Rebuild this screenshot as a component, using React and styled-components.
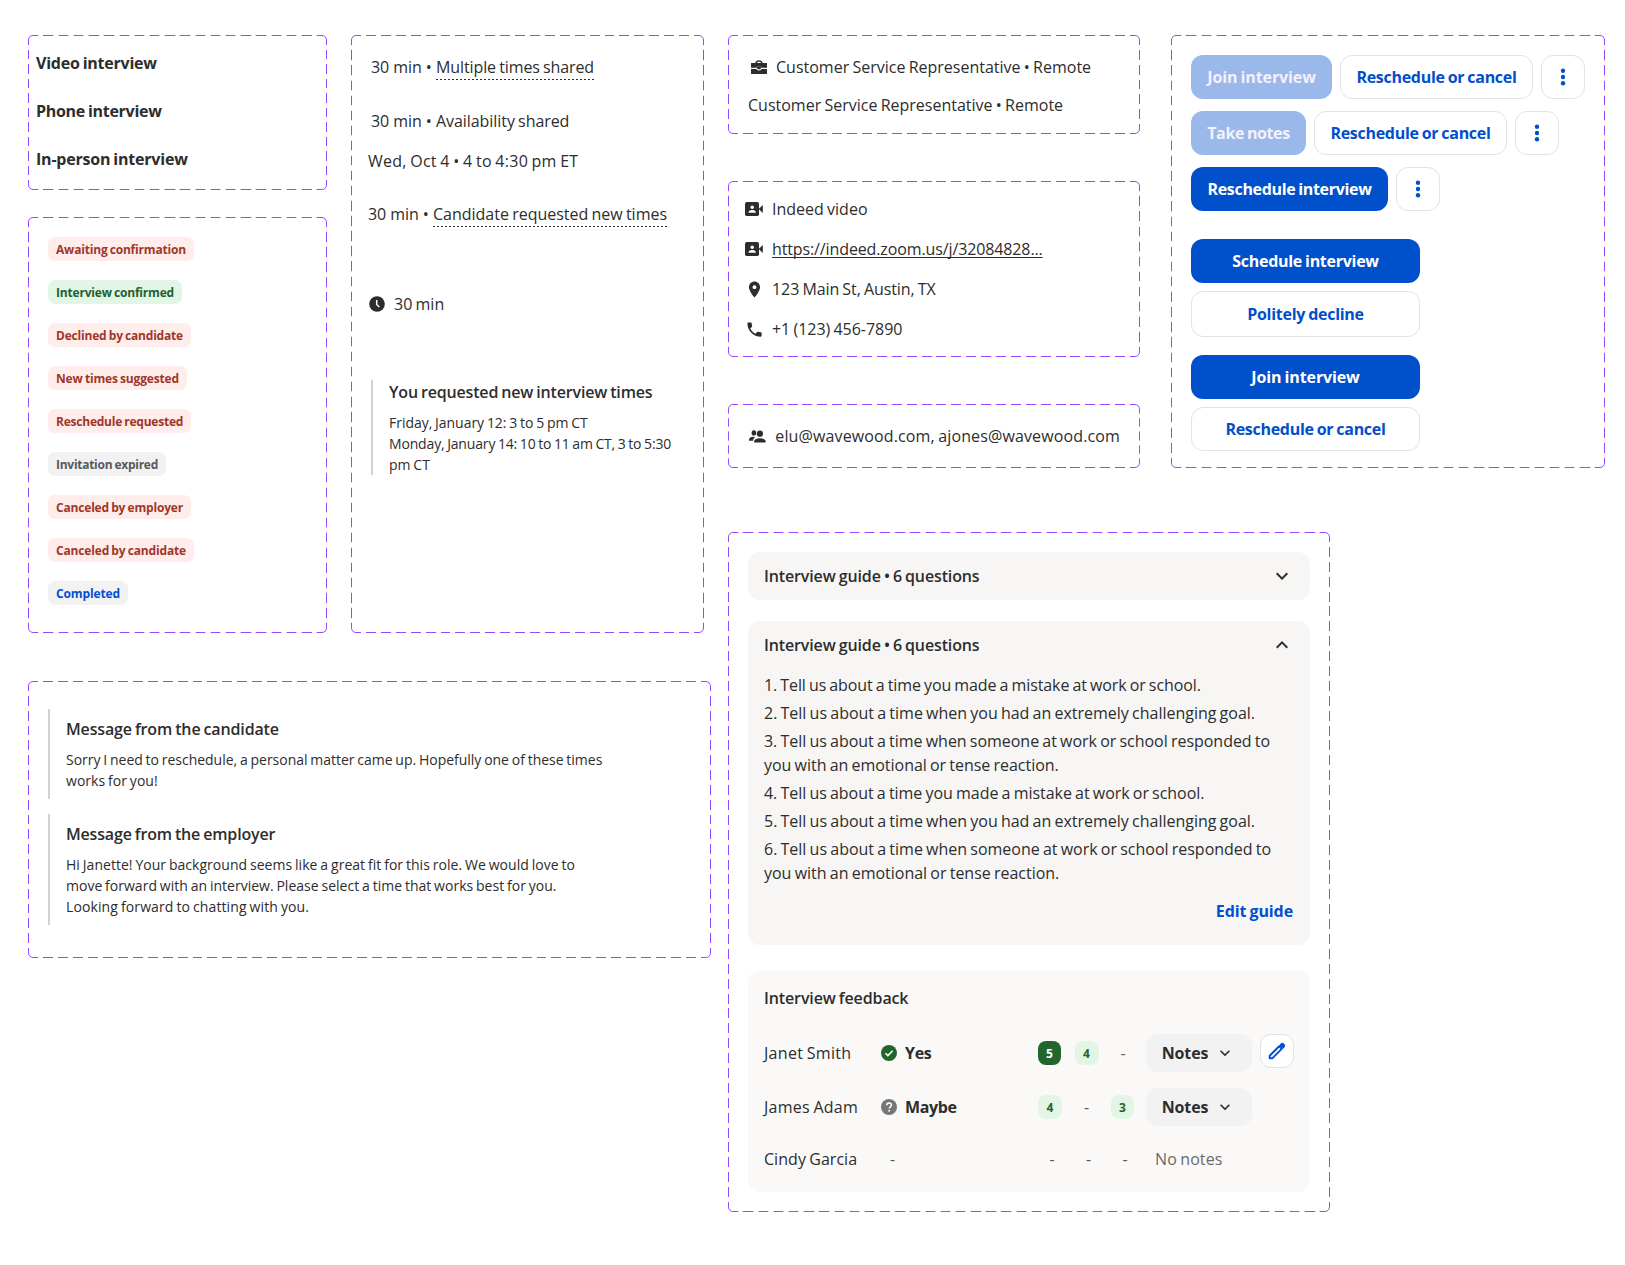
import styled, { createGlobalStyle } from 'styled-components'
import { MdExpandLess, MdExpandMore, MdLocationOn, MdPhone } from 'react-icons/md'

const GlobalStyle = createGlobalStyle`
  * {
    box-sizing: border-box;
    margin: 0;
    padding: 0;
  }

  body {
    background: #ffffff;
    color: #2d2d2d;
    font-family: 'Open Sans', 'Noto Sans', sans-serif;
    font-size: 16px;
    line-height: 24px;
  }

  ul,
  ol {
    list-style: none;
  }

  svg {
    display: block;
    flex: none;
  }
`

// one dash-gap period per edge, so the corners always stay solid
const dashedFrame = encodeURIComponent(
  `<svg xmlns='http://www.w3.org/2000/svg' width='25' height='25' fill='none' stroke='#9747ff'>
    <path d='M.5 10V5A4.5 4.5 0 0 1 5 .5h5M15 .5h5A4.5 4.5 0 0 1 24.5 5v5M24.5 15v5a4.5 4.5 0 0 1-4.5 4.5h-5M10 24.5H5A4.5 4.5 0 0 1 .5 20v-5'/>
  </svg>`
)

const Page = styled.main`
  display: flex;
  gap: 17px;
  width: 1625px;
  height: 1265px;
  padding: 35px 0 0 28px;
`

const LeftArea = styled.div`
  width: 683px;
  display: flex;
  flex-direction: column;
  gap: 48px;
`

const RightArea = styled.div`
  display: flex;
  flex-direction: column;
  align-items: flex-start;
  gap: 64px;
`

const Columns = styled.div`
  display: flex;
  gap: ${p => p.$gap}px;
`

const Stack = styled.div`
  display: flex;
  flex-direction: column;
  gap: ${p => p.$gap}px;
`

const Frame = styled.section`
  width: ${p => p.$width}px;
  height: ${p => p.$height}px;
  border: 1px solid transparent;
  border-image: url("data:image/svg+xml,${dashedFrame}") 5 / 5px round;
`

const Text = styled.span`
  display: block;
  white-space: nowrap;
  word-spacing: -0.9px;
  letter-spacing: ${p => p.$track || 0}px;
`

const Bold = styled(Text)`
  font-weight: 700;
`

const Heading = styled(Text).attrs({ as: 'h3' })`
  font-size: 16px;
  font-weight: 600;
`

/* interview types */

const TypeFrame = styled(Frame)`
  display: flex;
  flex-direction: column;
  gap: 24px;
  padding: 15px 7px;
`

/* status pills */

const tones = {
  danger: { bg: '#ffedeb', color: '#a0362a' },
  success: { bg: '#e2f6e5', color: '#226130' },
  neutral: { bg: '#f2f2f2', color: '#595959' },
  info: { bg: '#f2f2f2', color: '#0050d1' }
}

const PillFrame = styled(Frame)`
  display: flex;
  flex-direction: column;
  align-items: flex-start;
  gap: 19px;
  padding: 19px;
`

const Pill = styled.span`
  height: 24px;
  padding: 1px 8px 0;
  border-radius: 7px;
  font-size: 12px;
  font-weight: 700;
  white-space: nowrap;
  word-spacing: -0.7px;
  letter-spacing: ${p => p.$track}px;
  background: ${p => tones[p.$tone].bg};
  color: ${p => tones[p.$tone].color};
`

/* schedule details */

const ScheduleFrame = styled(Frame)`
  padding: 19px 16px;
`

const Meta = styled.p`
  display: flex;
  white-space: pre;
  margin-left: ${p => p.$indent || 0}px;
  margin-top: ${p => p.$top || 0}px;
`

const Duration = styled.span`
  width: 65px;
  letter-spacing: -0.06px;
`

const DottedText = styled(Text)`
  height: 25px;
  background: repeating-linear-gradient(90deg, #2d2d2d 0 2px, transparent 2px 4px) left bottom / 100% 1px no-repeat;
`

const DurationRow = styled.div`
  display: flex;
  align-items: center;
  gap: 9px;
  margin: 65px 0 0 1px;
`

const Quote = styled.article`
  border-left: 2px solid #d4d2d0;
  padding: ${p => p.$pad || 0}px 0 ${p => p.$pad || 0}px 16px;
`

const RequestedTimes = styled(Quote)`
  margin: 64px 0 0 3px;
`

const QuoteBody = styled.div`
  margin-top: 8px;
  font-size: 14px;
  line-height: 21px;

  ${Text} {
    word-spacing: -0.8px;
  }
`

const MessageFrame = styled(Frame)`
  display: flex;
  flex-direction: column;
  gap: 15px;
  padding: 27px 19px;
`

/* job and contact details */

const JobFrame = styled(Frame)`
  display: flex;
  flex-direction: column;
  gap: 14px;
  padding: 19px;
`

const ContactFrame = styled(Frame)`
  display: flex;
  flex-direction: column;
  gap: 16px;
  padding: 15px 16px;
`

const AttendeeFrame = styled(Frame)`
  padding: 19px;
`

const IconRow = styled.div`
  display: flex;
  align-items: center;
  gap: 9px;
`

const IconSlot = styled.span`
  width: ${p => p.$width || 18}px;
  display: flex;
  justify-content: ${p => (p.$width ? 'flex-end' : 'center')};
`

const UrlText = styled(Text)`
  text-decoration: underline 1px;
  text-underline-offset: 2px;
  text-decoration-skip-ink: none;
`

/* actions */

const ActionFrame = styled(Frame)`
  padding: 19px;
`

const ButtonRow = styled.div`
  display: flex;
  gap: 8px;
`

const ButtonColumn = styled.div`
  width: 229px;
  display: flex;
  flex-direction: column;
  gap: 8px;
  margin-top: ${p => p.$top}px;
`

const Button = styled.button`
  width: ${p => (p.$width ? `${p.$width}px` : 'auto')};
  height: ${p => p.$height || 44}px;
  display: flex;
  align-items: center;
  justify-content: center;
  border: none;
  border-radius: 12px;
  background: #004fcb;
  color: #ffffff;
  font: inherit;

  &:disabled {
    background: #9ab8ea;
    color: #f4f1fd;
  }
`

const OutlineButton = styled(Button)`
  background: #ffffff;
  border: 1px solid #e4e2e0;
  color: #004fcb;
`

const NotesButton = styled(Button)`
  gap: 7px;
  background: #f3f2f2;
  color: #2d2d2d;
  padding-right: 1px;
`

const EditButton = styled(OutlineButton)`
  border-radius: 11px;
  margin-left: 8px;
  align-self: flex-start;
`

/* guide and feedback */

const GuideFrame = styled(Frame)`
  padding: 19px;
`

const Card = styled.div`
  height: ${p => p.$height}px;
  margin-top: ${p => p.$top || 0}px;
  padding: ${p => p.$padY || 12}px 16px 0;
  border-radius: 12px;
  background: ${p => p.$bg || '#f7f6f5'};
`

const CardHeader = styled.header`
  display: flex;
  justify-content: space-between;
`

const QuestionList = styled.ol`
  display: flex;
  flex-direction: column;
  gap: 4px;
  margin-top: 16px;
`

const EditLink = styled(Bold)`
  margin: 14px 1px 0 0;
  text-align: right;
  color: #0050d1;
`

const FeedbackRow = styled.div`
  display: grid;
  grid-template-columns: 117px 157px 108px 106px auto;
  align-items: center;
  justify-content: start;
  margin-top: ${p => p.$top}px;
`

const Verdict = styled.div`
  display: flex;
  align-items: center;
  gap: 8px;
`

const Scores = styled.div`
  display: grid;
  grid-template-columns: repeat(3, 24px);
  gap: 12.5px;
  padding-left: ${p => (p.$empty ? 2 : 0)}px;
`

const Score = styled.span`
  width: ${p => (p.$narrow ? 23 : 24)}px;
  height: 24px;
  padding-top: 1px;
  border-radius: 8px;
  text-align: center;
  font-size: 12px;
  font-weight: 700;
  background: ${p => (p.$strong ? '#22662e' : '#e3f6e6')};
  color: ${p => (p.$strong ? '#ffffff' : '#22662e')};
`

const Dash = styled.span`
  text-align: center;
  color: #595959;
  padding-left: ${p => p.$indent || 0}px;
`

const Muted = styled(Text)`
  padding-left: 9px;
  color: #6a6a6a;
`

const ClockIcon = () => (
  <svg width='16' height='16' viewBox='0 0 16 16'>
    <circle cx='8' cy='8' r='7.8' fill='#2d2d2d' />
    <path d='M7.7 4v4.4l2.6 2.7' fill='none' stroke='#ffffff' strokeWidth='1.5' />
  </svg>
)

const BriefcaseIcon = () => (
  <svg width='16' height='14' viewBox='0 0 16 14' fill='#2d2d2d'>
    <path d='M4.2 3.2C4.5 1.2 6 .2 8 .2s3.5 1 3.8 3h-1.7C9.8 2.1 9.1 1.7 8 1.7s-1.8.4-2.1 1.5z' />
    <path d='M.5 2.9h15a.5.5 0 0 1 .5.500V8h-5.600V6.800H5.600V8H0V3.400a.5.500 0 0 1 .5-.5z' />
    <path d='M0 9h5.600l1.300 1.200h2.200L10.400 9H16v4.500a.5.500 0 0 1-.5.500H.5a.5.500 0 0 1-.5-.5z' />
    <path d='M5.600 6.800h4.800V9L9.100 10.200H6.900L5.600 9z' fill='#2d2d2d' />
    <path d='M0 7.800h5.600L7 9.200h2l1.400-1.400H16V9h-5.400l-1.200 1.200H6.600L5.400 9H0z' fill='#ffffff' />
  </svg>
)

const VideoIcon = () => (
  <svg width='18' height='14' viewBox='0 0 18 14'>
    <rect width='14' height='14' rx='1.7' fill='#2d2d2d' />
    <path d='M13.7 7 17.8 2.9v8.200z' fill='#2d2d2d' />
    <circle cx='7.2' cy='5.2' r='1.7' fill='#ffffff' />
    <path d='M3.6 10.8V10c0-1.300 2-2.100 3.600-2.100s3.600.8 3.600 2.100v.8z' fill='#ffffff' />
  </svg>
)

const PeopleIcon = () => (
  <svg width='17' height='13' viewBox='0 0 17 13' fill='#2d2d2d'>
    <ellipse cx='4.9' cy='2.9' rx='2.3' ry='2.7' />
    <path d='M0 10.8V9.6c0-1.700 2-2.600 4.200-2.800l2 .4C4.700 8 4.100 9.200 4.100 10.800z' />
    <circle cx='10.9' cy='3.7' r='3.1' />
    <path d='M5.2 12.5v-1.200c0-2.100 3-3.100 5.700-3.100s5.700 1 5.700 3.100v1.200z' />
  </svg>
)

const DotsIcon = () => (
  <svg width='24' height='24' viewBox='0 0 24 24' fill='#004fcb'>
    <circle cx='12' cy='5.8' r='2.2' />
    <circle cx='12' cy='12' r='2.2' />
    <circle cx='12' cy='18.2' r='2.2' />
  </svg>
)

const YesIcon = () => (
  <svg width='16' height='16' viewBox='0 0 16 16'>
    <circle cx='8' cy='8' r='8' fill='#22662e' />
    <path d='m4.4 8.2 2.5 2.4 4.7-4.8' fill='none' stroke='#ffffff' strokeWidth='1.5' />
  </svg>
)

const MaybeIcon = () => (
  <svg width='16' height='16' viewBox='0 0 16 16'>
    <circle cx='8' cy='8' r='8' fill='#767676' />
    <path d='M5.7 6.3C5.7 4.9 6.7 4 8.1 4s2.3.9 2.3 2.1c0 1.700-2.200 1.700-2.200 3.500' fill='none' stroke='#ffffff' strokeWidth='1.5' />
    <circle cx='8.2' cy='11.7' r='1' fill='#ffffff' />
  </svg>
)

const PencilIcon = () => (
  <svg width='18' height='18' viewBox='0 0 16 16' fill='none' stroke='#0050d1'>
    <path d='M1.500 14.500v-2.300l8.400-8.400 2.300 2.300-8.400 8.400z' strokeWidth='1.7' strokeLinejoin='round' />
    <path d='m10.800 2.900 1.100-1.100a1.200 1.200 0 0 1 1.700 0l.6.6a1.200 1.200 0 0 1 0 1.700l-1.100 1.100z' fill='#0050d1' strokeWidth='1.400' />
  </svg>
)

const pills = [
  { label: 'Awaiting confirmation', tone: 'danger', track: -0.19 },
  { label: 'Interview confirmed', tone: 'success', track: -0.19 },
  { label: 'Declined by candidate', tone: 'danger', track: -0.19 },
  { label: 'New times suggested', tone: 'danger', track: -0.16 },
  { label: 'Reschedule requested', tone: 'danger', track: -0.23 },
  { label: 'Invitation expired', tone: 'neutral', track: -0.27 },
  { label: 'Canceled by employer', tone: 'danger', track: -0.18 },
  { label: 'Canceled by candidate', tone: 'danger', track: -0.16 },
  { label: 'Completed', tone: 'info', track: -0.12 }
]

const questions = [
  { lines: ['1. Tell us about a time you made a mistake at work or school.'], track: -0.1 },
  { lines: ['2. Tell us about a time when you had an extremely challenging goal.'], track: -0.015 },
  {
    lines: [
      '3. Tell us about a time when someone at work or school responded to',
      'you with an emotional or tense reaction.'
    ],
    track: -0.03
  },
  { lines: ['4. Tell us about a time you made a mistake at work or school.'], track: -0.04 },
  { lines: ['5. Tell us about a time when you had an extremely challenging goal.'], track: -0.015 },
  {
    lines: [
      '6. Tell us about a time when someone at work or school responded to',
      'you with an emotional or tense reaction.'
    ],
    track: -0.015
  }
]

const MoreButton = () => (
  <OutlineButton $width={44} aria-label='More options'>
    <DotsIcon />
  </OutlineButton>
)

const Notes = () => (
  <NotesButton $width={106} $height={38}>
    <Bold $track={-0.16}>Notes</Bold>
    <MdExpandMore size={20} />
  </NotesButton>
)

const App = function App() {
  return (
    <Page>
      <GlobalStyle />

      <LeftArea>
        <Columns $gap={24}>
          <Stack $gap={27}>
            <TypeFrame $width={299} $height={155}>
              <Bold $track={-0.23}>Video interview</Bold>
              <Bold $track={-0.29}>Phone interview</Bold>
              <Bold $track={-0.21}>In-person interview</Bold>
            </TypeFrame>

            <PillFrame $width={299} $height={416}>
              {pills.map(pill => (
                <Pill key={pill.label} $tone={pill.tone} $track={pill.track}>
                  {pill.label}
                </Pill>
              ))}
            </PillFrame>
          </Stack>

          <ScheduleFrame $width={353} $height={598}>
            <Meta $indent={3}>
              <Duration>30 min • </Duration>
              <DottedText $track={-0.1}>Multiple times shared</DottedText>
            </Meta>
            <Meta $indent={3} $top={29}>
              <Duration>30 min • </Duration>
              <Text $track={-0.06}>Availability shared</Text>
            </Meta>
            <Meta $top={16}>
              <Text $track={0.26}>Wed, Oct 4 • 4 to 4:30 pm ET</Text>
            </Meta>
            <Meta $top={29}>
              <Duration>30 min • </Duration>
              <DottedText $track={-0.01}>Candidate requested new times</DottedText>
            </Meta>

            <DurationRow>
              <ClockIcon />
              <Text $track={0}>30 min</Text>
            </DurationRow>

            <RequestedTimes>
              <Heading $track={-0.17}>You requested new interview times</Heading>
              <QuoteBody>
                <Text $track={-0.03}>Friday, January 12: 3 to 5 pm CT</Text>
                <Text $track={-0.16}>Monday, January 14: 10 to 11 am CT, 3 to 5:30</Text>
                <Text>pm CT</Text>
              </QuoteBody>
            </RequestedTimes>
          </ScheduleFrame>
        </Columns>

        <MessageFrame $width={683} $height={277}>
          <Quote $pad={8}>
            <Heading $track={-0.15}>Message from the candidate</Heading>
            <QuoteBody>
              <Text $track={-0.02}>
                Sorry I need to reschedule, a personal matter came up. Hopefully one of these times
              </Text>
              <Text $track={0.03}>works for you!</Text>
            </QuoteBody>
          </Quote>
          <Quote $pad={8}>
            <Heading $track={-0.17}>Message from the employer</Heading>
            <QuoteBody>
              <Text $track={0.03}>
                Hi Janette! Your background seems like a great fit for this role. We would love to
              </Text>
              <Text $track={0.01}>
                move forward with an interview. Please select a time that works best for you.
              </Text>
              <Text $track={0.11}>Looking forward to chatting with you.</Text>
            </QuoteBody>
          </Quote>
        </MessageFrame>
      </LeftArea>

      <RightArea>
        <Columns $gap={31}>
          <Stack $gap={47}>
            <JobFrame $width={412} $height={99}>
              <IconRow>
                <IconSlot $width={19}>
                  <BriefcaseIcon />
                </IconSlot>
                <Text>Customer Service Representative • Remote</Text>
              </IconRow>
              <Text>Customer Service Representative • Remote</Text>
            </JobFrame>

            <ContactFrame $width={412} $height={176}>
              <IconRow>
                <IconSlot>
                  <VideoIcon />
                </IconSlot>
                <Text>Indeed video</Text>
              </IconRow>
              <IconRow>
                <IconSlot>
                  <VideoIcon />
                </IconSlot>
                <UrlText $track={-0.12}>https://indeed.zoom.us/j/32084828...</UrlText>
              </IconRow>
              <IconRow>
                <IconSlot>
                  <MdLocationOn size={19} />
                </IconSlot>
                <Text $track={-0.08}>123 Main St, Austin, TX</Text>
              </IconRow>
              <IconRow>
                <IconSlot>
                  <MdPhone size={19} />
                </IconSlot>
                <Text $track={-0.03}>+1 (123) 456-7890</Text>
              </IconRow>
            </ContactFrame>

            <AttendeeFrame $width={412} $height={64}>
              <IconRow>
                <IconSlot $width={19}>
                  <PeopleIcon />
                </IconSlot>
                <Text $track={0.13}>elu@wavewood.com, ajones@wavewood.com</Text>
              </IconRow>
            </AttendeeFrame>
          </Stack>

          <ActionFrame $width={434} $height={433}>
            <Stack $gap={12}>
              <ButtonRow>
                <Button disabled $width={141}>
                  <Bold $track={-0.11}>Join interview</Bold>
                </Button>
                <OutlineButton $width={193}>
                  <Bold $track={-0.28}>Reschedule or cancel</Bold>
                </OutlineButton>
                <MoreButton />
              </ButtonRow>
              <ButtonRow>
                <Button disabled $width={115}>
                  <Bold $track={-0.38}>Take notes</Bold>
                </Button>
                <OutlineButton $width={193}>
                  <Bold $track={-0.28}>Reschedule or cancel</Bold>
                </OutlineButton>
                <MoreButton />
              </ButtonRow>
              <ButtonRow>
                <Button $width={197}>
                  <Bold $track={-0.33}>Reschedule interview</Bold>
                </Button>
                <MoreButton />
              </ButtonRow>
            </Stack>

            <ButtonColumn $top={28}>
              <Button>
                <Bold $track={-0.27}>Schedule interview</Bold>
              </Button>
              <OutlineButton $height={46}>
                <Bold $track={-0.27}>Politely decline</Bold>
              </OutlineButton>
            </ButtonColumn>
            <ButtonColumn $top={18}>
              <Button>
                <Bold $track={-0.12}>Join interview</Bold>
              </Button>
              <OutlineButton>
                <Bold $track={-0.28}>Reschedule or cancel</Bold>
              </OutlineButton>
            </ButtonColumn>
          </ActionFrame>
        </Columns>

        <GuideFrame $width={602} $height={680}>
          <Card $height={48}>
            <CardHeader>
              <Heading $track={-0.13}>Interview guide • 6 questions</Heading>
              <MdExpandMore size={24} />
            </CardHeader>
          </Card>

          <Card $height={324} $top={21}>
            <CardHeader>
              <Heading $track={-0.13}>Interview guide • 6 questions</Heading>
              <MdExpandLess size={24} />
            </CardHeader>
            <QuestionList>
              {questions.map(question => (
                <li key={question.lines[0]}>
                  {question.lines.map(line => (
                    <Text key={line} $track={question.track}>
                      {line}
                    </Text>
                  ))}
                </li>
              ))}
            </QuestionList>
            <EditLink $track={-0.1}>Edit guide</EditLink>
          </Card>

          <Card $height={222} $top={25} $padY={16} $bg='#faf9f8'>
            <Heading $track={-0.12}>Interview feedback</Heading>

            <FeedbackRow $top={24}>
              <Text $track={0.3}>Janet Smith</Text>
              <Verdict>
                <YesIcon />
                <Bold $track={-0.3}>Yes</Bold>
              </Verdict>
              <Scores>
                <Score $strong $narrow>
                  5
                </Score>
                <Score>4</Score>
                <Dash>-</Dash>
              </Scores>
              <Notes />
              <EditButton $width={34} $height={34} aria-label='Edit feedback'>
                <PencilIcon />
              </EditButton>
            </FeedbackRow>

            <FeedbackRow $top={16}>
              <Text $track={0.26}>James Adam</Text>
              <Verdict>
                <MaybeIcon />
                <Bold $track={-0.38}>Maybe</Bold>
              </Verdict>
              <Scores>
                <Score>4</Score>
                <Dash>-</Dash>
                <Score $narrow>3</Score>
              </Scores>
              <Notes />
            </FeedbackRow>

            <FeedbackRow $top={21}>
              <Text $track={0.04}>Cindy Garcia</Text>
              <Verdict>
                <Dash $indent={9}>-</Dash>
              </Verdict>
              <Scores $empty>
                <Dash>-</Dash>
                <Dash>-</Dash>
                <Dash>-</Dash>
              </Scores>
              <Muted $track={0.1}>No notes</Muted>
            </FeedbackRow>
          </Card>
        </GuideFrame>
      </RightArea>
    </Page>
  )
}

export default App
